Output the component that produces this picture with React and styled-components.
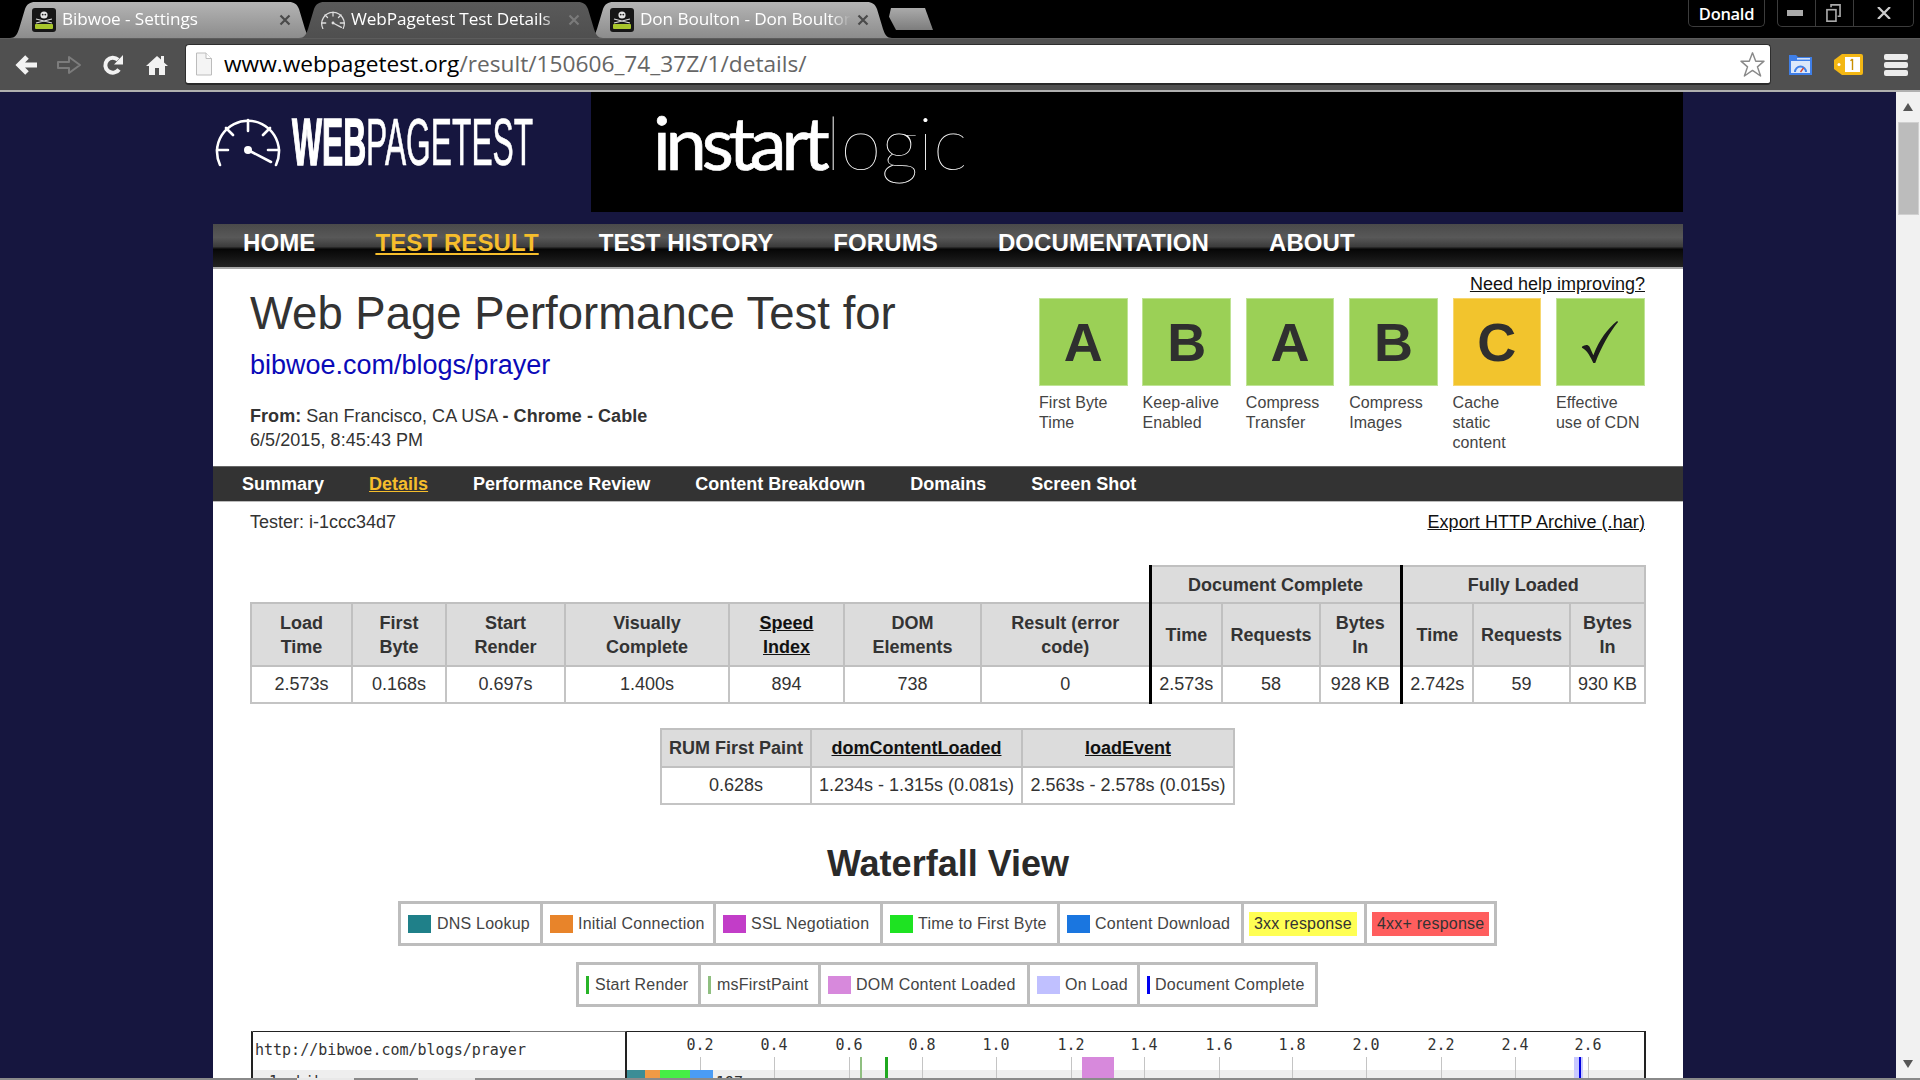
import React from "react";
import styled, { createGlobalStyle } from "styled-components";

const Global = createGlobalStyle`
  html, body { margin: 0; padding: 0; background: #16163f; overflow: hidden; }
  * { box-sizing: border-box; }
`;

const Root = styled.div`
  width: 1920px; height: 1080px; display: flex; flex-direction: column; overflow: hidden;
  font-family: "Liberation Sans", Arial, sans-serif; color: #333; background: #16163f;
`;

/* ---------- browser chrome ---------- */
const TabStrip = styled.div`
  height: 38px; background: #000; display: flex; align-items: flex-end; padding-left: 10px; flex: none;
  font-family: "Open Sans", sans-serif;
`;
const Tab = styled.div`
  width: 304px; height: 36px; margin-right: -15px; display: flex; align-items: center; flex: none;
  padding: 0 23px 0 22px; gap: 6px; position: relative; z-index: ${p => (p.$active ? 2 : 1)};
  background: ${p => (p.$active ? "linear-gradient(#5a5a5a,#4f4f4f)" : "linear-gradient(#b4b4b4,#8c8c8c)")};
  clip-path: path("M0 36 C5 36 7 33 9 27 L15 7 C17 2 20 0 25 0 L279 0 C284 0 287 2 289 7 L295 27 C297 33 299 36 304 36 Z");
`;
const TabTitle = styled.span`
  flex: 1; font-size: 17.2px; line-height: 24px; padding-bottom: 2px; color: #fff; white-space: nowrap; overflow: hidden; letter-spacing: -0.1px;
  -webkit-mask-image: linear-gradient(90deg, #000 90%, transparent 100%);
  mask-image: linear-gradient(90deg, #000 90%, transparent 100%);
`;
const NewTab = styled.div`
  width: 46px; height: 22px; margin: 0 0 8px 10px; flex: none; background: linear-gradient(#aaa,#7d7d7d);
  clip-path: polygon(4px 0, 38px 0, 46px 100%, 9px 100%, 2px 40%);
  position: relative; z-index: 0;
`;
const WindowArea = styled.div`
  margin-left: auto; align-self: flex-start; display: flex; gap: 12px; padding-right: 6px;
`;
const UserBadge = styled.div`
  width: 77px; height: 27px; border: 1px solid #3c3c3c; border-top: 0; border-radius: 0 0 5px 5px;
  color: #fff; font-size: 16.5px; font-weight: 600; text-align: center; line-height: 27px; letter-spacing: -0.3px;
`;
const WinButtons = styled.div`
  width: 137px; height: 27px; border: 1px solid #3c3c3c; border-top: 0; border-radius: 0 0 5px 5px; display: flex;
`;
const WinBtn = styled.div`
  width: ${p => p.$w}px; display: flex; align-items: center; justify-content: center;
  padding-right: ${p => p.$pr || 0}px;
  border-left: ${p => (p.$first ? "0" : "1px solid #3c3c3c")};
`;
const Toolbar = styled.div`
  height: 54px; flex: none; background: #505050; border-bottom: 2px solid #b0b0b0; display: flex; align-items: center;
  padding-left: 6px; border-top: 1px solid #5c5c5c; font-family: "Open Sans", sans-serif;
`;
const Slot = styled.div`
  width: ${p => p.$w}px; height: 40px; flex: none; display: flex; align-items: center; justify-content: center;
`;
const AddressBar = styled.div`
  width: 1586px; height: 41px; margin: 0 5px 0 7px; background: #fff; border-radius: 4px; flex: none;
  border: 1px solid #2e2e2e; border-bottom: 2px solid #2a2a2a; display: flex; align-items: center; padding: 0 4px 0 9px;
`;
const Url = styled.div`
  flex: 1; margin-left: 11px; padding-bottom: 1px; font-size: 22.7px; line-height: 30px; color: #666; white-space: nowrap;
  b { font-weight: 400; color: #000; }
`;

/* ---------- page ---------- */
const Viewport = styled.div`
  flex: 1; min-height: 0; display: flex;
`;
const Page = styled.div`
  flex: 1; overflow: hidden; background: #16163f;
`;
const Column = styled.div`
  width: 1470px; margin: 0 auto;
`;
const Header = styled.header`
  height: 120px; margin-bottom: 12px; display: flex;
`;
const LogoArea = styled.div`
  width: 378px; padding: 25px 0 0 2px; display: flex; align-items: flex-start; flex: none;
`;
const LogoText = styled.div`
  margin: -9px 0 0 11px; font-size: 67px; line-height: 67px; color: #fff; white-space: nowrap; transform: scaleX(.474); transform-origin: left top;
  -webkit-text-stroke: .7px #fff;
  b { font-weight: 700; -webkit-text-stroke: 1.6px #fff; }
`;
const Ad = styled.div`
  flex: 1; background: #000; padding: 2px 0 0 62px; color: #fff; white-space: nowrap;
  font-family: Lato, sans-serif; font-size: 74px; line-height: 96px;
`;
const AdStrong = styled.span`
  font-weight: 400; letter-spacing: -5.2px; -webkit-text-stroke: .7px #fff;
`;
const AdThin = styled.span`
  font-weight: 100; letter-spacing: -.3px; margin-left: 1px;
`;
const Nav = styled.nav`
  height: 45px; padding: 0 0 7px 30px; display: flex; gap: 60px; align-items: center;
  background: linear-gradient(#4a4a4a 0, #585858 30%, #3c3c3c 50%, #060606 56%, #232323 96%, #a8a8a8 96%);
`;
const NavLink = styled.a`
  font-size: 24px; font-weight: 700; letter-spacing: .1px; color: ${p => (p.$active ? "#f6be2c" : "#fff")};
  text-decoration: ${p => (p.$active ? "underline" : "none")};
`;
const Main = styled.main`
  background: #fff; padding-bottom: 40px;
`;
const Top = styled.section`
  height: 197px; display: flex; justify-content: space-between; padding: 0 38px 0 37px;
`;
const TitleCol = styled.div`
  padding-top: 20px;
`;
const Title = styled.h1`
  margin: 0; font-size: 45.5px; line-height: 50px; font-weight: 400; color: #333;
`;
const SiteLink = styled.a`
  display: block; margin-top: 10px; font-size: 27px; line-height: 32px; color: #0a0ab8;
`;
const Meta = styled.div`
  font-size: 18px; line-height: 24px; letter-spacing: .05px; margin-top: ${p => p.$mt || 0}px; color: #333;
`;
const GradeCol = styled.div`
  width: 606px; display: flex; flex-direction: column; align-items: flex-end;
`;
const HelpLink = styled.a`
  margin-top: 4px; font-size: 18px; line-height: 22px; color: #111; text-decoration: underline;
`;
const GradeGrid = styled.div`
  margin-top: 3px; width: 606px; display: grid; grid-template-columns: repeat(6, 88.7px); column-gap: 14.7px;
`;
const GradeBox = styled.div`
  height: 88px; border: 1px solid ${p => (p.$c === "y" ? "#f7d770" : "#bfe395")};
  background: ${p => (p.$c === "y" ? "#f2c42d" : "#9bd056")};
  display: flex; align-items: center; justify-content: center;
  font-size: 54px; font-weight: 700; color: #2f2f2f;
`;
const GradeLabel = styled.div`
  margin-top: 7px; font-size: 16px; line-height: 20px; letter-spacing: .1px; color: #444; white-space: nowrap;
`;
const SubNav = styled.nav`
  height: 36px; background: #333; border-top: 1px solid #666; border-bottom: 1px solid #bbb; padding-left: 29px; display: flex; gap: 45px; align-items: center;
`;
const SubLink = styled.a`
  font-size: 18px; font-weight: 700; color: ${p => (p.$active ? "#f6be2c" : "#fff")};
  text-decoration: ${p => (p.$active ? "underline" : "none")};
`;
const InfoRow = styled.div`
  height: 40px; display: flex; align-items: center; justify-content: space-between; padding: 0 38px 0 37px; font-size: 18px;
`;
const ExportLink = styled.a`
  color: #111; text-decoration: underline; letter-spacing: .07px;
`;
const Table = styled.table`
  border-collapse: collapse; table-layout: fixed; font-size: 18px; text-align: center; color: #333;
  margin: ${p => p.$m};
  width: ${p => p.$w}px;
`;
const Th = styled.th`
  background: #dcdcdc; border: 2px solid #c0c0c0; font-weight: 700; line-height: 24px; padding: 0; color: #333;
  height: ${p => p.$h || 63}px;
  border-left: ${p => (p.$strong ? "3px solid #000" : "2px solid #c0c0c0")};
  a { color: #111; text-decoration: underline; }
`;
const Blank = styled.th`
  border: 0; padding: 0; background: #fff;
`;
const Td = styled.td`
  border: 2px solid #c4c4c4; padding: 0; height: 37px; color: #333; white-space: nowrap;
  border-left: ${p => (p.$strong ? "3px solid #000" : "2px solid #c4c4c4")};
`;
const Heading = styled.h2`
  margin: 37px 0 15px; text-align: center; font-size: 36px; line-height: 44px; font-weight: 700; color: #2a2a2a;
`;
const Legend = styled.div`
  display: flex; width: max-content; height: 45px; margin: ${p => p.$m}; border: 3px solid #bdbdbd; background: #fff;
`;
const LegendItem = styled.div`
  width: ${p => p.$w}px; display: flex; align-items: center; gap: ${p => p.$gap ?? 5}px; padding-left: 7px; flex: none;
  font-size: 16px; color: #444; white-space: nowrap; letter-spacing: .22px;
  & + & { border-left: 3px solid #bdbdbd; }
`;
const Swatch = styled.span`
  width: ${p => p.$w || 23}px; height: 18px; flex: none; background: ${p => p.$c};
`;
const Badge = styled.span`
  background: ${p => p.$c}; padding: 0 5px; height: 24px; line-height: 24px; color: #333; margin-left: -2px;
`;
const Waterfall = styled.div`
  margin: 24px 0 0 38px; width: 1395px; height: 60px; display: flex; background: #fff;
`;
const UrlPanel = styled.div`
  width: 376px; flex: none; border-left: 2px solid #222; border-right: 2px solid #222; position: relative;
  border-top: 1px solid #777;
  font-family: "DejaVu Sans Mono", monospace; font-size: 15px; color: #333;
  &::before { content: ""; position: absolute; top: -1px; left: 0; width: 257px; height: 1px; background: #222; }
`;
const UrlHead = styled.div`
  height: 38px; padding: 9px 0 0 2px; line-height: 18px;
`;
const UrlRow = styled.div`
  height: 24px; background: #eee; padding-left: 16px; line-height: 24px;
`;
const Chart = styled.svg`
  flex: 1; display: block; height: 60px;
`;
const ChartLabel = styled.text`
  font-family: "DejaVu Sans Mono", monospace; font-size: 15px; fill: #333; text-anchor: middle;
`;
const Scrollbar = styled.div`
  width: 24px; flex: none; background: #f1f1f1; display: flex; flex-direction: column; align-items: center;
`;
const ArrowSlot = styled.div`
  height: ${p => p.$h}px; display: flex; align-items: center; justify-content: center; flex: none;
`;
const Arrow = styled.span`
  width: 0; height: 0; border-left: 5px solid transparent; border-right: 5px solid transparent;
  ${p => (p.$down ? "border-top: 8px solid #555;" : "border-bottom: 8px solid #555;")}
`;
const Thumb = styled.div`
  width: 21px; height: 93px; background: #bcbcbc; border: 1px solid #d0d0d0; flex: none;
`;
const Fill = styled.div` flex: 1; `;
const Frame = styled.div`
  height: 2px; flex: none; background: #8a8a8a; display: flex;
`;
const FrameNotch = styled.span`
  width: 57px; background: #e8e8e8; margin-left: ${p => p.$ml}px;
`;

/* ---------- drawings ---------- */
const Gauge = ({ size = 66, color = "#fff", sw = 2.6 }) => (
  <svg width={size} height={size * 50 / 66} viewBox="0 0 66 50" fill="none" stroke={color} strokeWidth={sw} strokeLinecap="round" style={{ flex: "none" }}>
    <path d="M5 48A31 31 0 1 1 61 48" />
    <path d="M33 3V14M2 33H13M64 33H53M11 11L18 18M55 11L48 18" />
    <path d="M33 33L56 45" />
    <circle cx="33" cy="33" r="4" fill={color} stroke="none" />
  </svg>
);
const SkullIcon = () => (
  <svg width="24" height="24" viewBox="0 0 24 24" style={{ flex: "none" }}>
    <rect width="24" height="24" rx="3" fill="#161616" />
    <circle cx="12" cy="7" r="3.6" fill="#e4e4e4" />
    <path d="M4 11L20 15M20 11L4 15" stroke="#ddd" strokeWidth="1.2" />
    <circle cx="10.7" cy="6.6" r=".9" fill="#222" /><circle cx="13.3" cy="6.6" r=".9" fill="#222" />
    <rect x="3" y="16" width="18" height="5" rx="1" fill="#a8c62c" />
  </svg>
);
const CloseX = ({ color }) => (
  <svg width="12" height="12" viewBox="0 0 12 12" style={{ flex: "none" }}>
    <path d="M1.5 1.5L10.5 10.5M10.5 1.5L1.5 10.5" stroke={color} strokeWidth="2.2" />
  </svg>
);
const BackIcon = () => (
  <svg width="24" height="22" viewBox="0 0 24 22"><path d="M22 11H6M12 3L4 11L12 19" fill="none" stroke="#f2f2f2" strokeWidth="5" /></svg>
);
const ForwardIcon = () => (
  <svg width="26" height="22" viewBox="0 0 26 22"><path d="M2 8H13V3L24 11L13 19V14H2Z" fill="none" stroke="#7c7c7c" strokeWidth="2" strokeLinejoin="round" /></svg>
);
const ReloadIcon = () => (
  <svg width="24" height="24" viewBox="0 0 24 24"><path d="M18 16.5A7.5 7.5 0 1 1 17 6.8" fill="none" stroke="#f2f2f2" strokeWidth="4" /><path d="M22 2V11.5H13Z" fill="#f2f2f2" /></svg>
);
const HomeIcon = () => (
  <svg width="22" height="22" viewBox="0 0 22 22"><path d="M11 2L15 5.5V2H18V8.5L22 12H19V21H13V14H9V21H3V12H0Z" fill="#f2f2f2" /></svg>
);
const PageIcon = () => (
  <svg width="18" height="24" viewBox="0 0 18 24"><path d="M1.5 1H11L16.5 6.5V23H1.5Z" fill="#f4f4f4" stroke="#bcbcbc" /><path d="M11 1V6.5H16.5" fill="#fff" stroke="#bcbcbc" /></svg>
);
const StarIcon = () => (
  <svg width="27" height="27" viewBox="0 0 30 30" style={{ flex: "none" }}><path d="M15 2L18.6 11.3H27.8L20.5 17.6L24 27.8L15 21.6L6 27.8L9.5 17.6L2.2 11.3H11.4Z" fill="#fff" stroke="#8a8a8a" strokeWidth="1.6" strokeLinejoin="round" /></svg>
);
const FolderIcon = () => (
  <svg width="23" height="20" viewBox="0 0 23 20">
    <path d="M0 0H7L9 2H23V20H0Z" fill="#3f7fe8" />
    <rect x="8" y="3" width="13" height="1.6" fill="#cfe0fb" />
    <rect x="2" y="6" width="19" height="12" fill="#dbe8fb" />
    <path d="M6 17A5.5 5.5 0 0 1 17 17" fill="none" stroke="#3f7fe8" strokeWidth="2" />
    <path d="M11.5 17L14.5 13" stroke="#d8462e" strokeWidth="1.4" />
  </svg>
);
const TagIcon = () => (
  <svg width="29" height="21" viewBox="0 0 29 21">
    <path d="M8 0H27A2 2 0 0 1 29 2V19A2 2 0 0 1 27 21H8L0 15V6Z" fill="#f3b714" />
    <rect x="11" y="3" width="15" height="15" fill="#fff" />
    <circle cx="5" cy="10.5" r="1.5" fill="#fff" />
    <path d="M18.5 5V16M16.5 6.8L18.5 5" stroke="#c98f00" strokeWidth="1.4" fill="none" />
  </svg>
);
const MenuIcon = () => (
  <svg width="24" height="22" viewBox="0 0 24 22" fill="#ececec"><rect y="0" width="24" height="6" rx="2" /><rect y="8" width="24" height="6" rx="2" /><rect y="16" width="24" height="6" rx="2" /></svg>
);
const CheckMark = () => (
  <svg width="38" height="44" viewBox="0 0 40 46"><path d="M1 28C4 26 7 25 9 28L13 37C19 21 28 9 38 1L39 2C30 13 22 27 15 45L13 45C10 39 7 32 1 29Z" fill="#1c1c1c" /></svg>
);

/* ---------- data ---------- */
const grades = [
  { g: "A", l: ["First Byte", "Time"] },
  { g: "B", l: ["Keep-alive", "Enabled"] },
  { g: "A", l: ["Compress", "Transfer"] },
  { g: "B", l: ["Compress", "Images"] },
  { g: "C", l: ["Cache", "static", "content"], c: "y" },
  { g: "check", l: ["Effective", "use of CDN"] },
];
const cols = [101, 94, 119, 164, 115, 137, 169, 72, 98, 81, 72, 97, 75];
const ticks = [[0.2, 73], [0.4, 147], [0.6, 222], [0.8, 295], ["1.0", 369], [1.2, 444], [1.4, 517], [1.6, 592], [1.8, 665], ["2.0", 739], [2.2, 814], [2.4, 888], [2.6, 961]];

const WaterfallChart = () => (
  <Chart viewBox="0 0 1019 60" preserveAspectRatio="none">
    <rect x="0" y="0" width="1019" height="1" fill="#222" />
    <rect x="1017" y="0" width="2" height="60" fill="#222" />
    <rect x="0" y="39" width="1017" height="21" fill="#eee" />
    {ticks.map(([t, x]) => (
      <g key={x}>
        <rect x={x} y="26" width="1" height="34" fill="#c4c4c4" />
        <ChartLabel x={x} y="19">{Number(t).toFixed(1)}</ChartLabel>
      </g>
    ))}
    <rect x="455" y="26" width="32" height="34" fill="#d789dc" />
    <rect x="947" y="26" width="9" height="34" fill="#c8c8ff" />
    <rect x="952" y="26" width="2" height="34" fill="#0000e0" />
    <rect x="233" y="26" width="2" height="34" fill="#8fbf80" />
    <rect x="258" y="26" width="3" height="34" fill="#1fa81f" />
    <rect x="0" y="39" width="18" height="21" fill="#3b8d96" />
    <rect x="18" y="39" width="15" height="21" fill="#f09a45" />
    <rect x="33" y="39" width="30" height="21" fill="#45ee45" />
    <rect x="63" y="39" width="23" height="21" fill="#4a9cf5" />
    <ChartLabel x="116" y="57">197 ms</ChartLabel>
  </Chart>
);

export default function App() {
  return (
    <Root>
      <Global />
      <TabStrip>
        <Tab><SkullIcon /><TabTitle>Bibwoe - Settings</TabTitle><CloseX color="#4a4a4a" /></Tab>
        <Tab $active><Gauge size={24} color="#ddd" sw={3.5} /><TabTitle>WebPagetest Test Details</TabTitle><CloseX color="#7a7a7a" /></Tab>
        <Tab><SkullIcon /><TabTitle>Don Boulton - Don Boulton</TabTitle><CloseX color="#4a4a4a" /></Tab>
        <NewTab />
        <WindowArea>
          <UserBadge>Donald</UserBadge>
          <WinButtons>
            <WinBtn $first $w={37} $pr={3}><svg width="16" height="6"><rect width="16" height="6" fill="#aaa" /></svg></WinBtn>
            <WinBtn $w={38} $pr={2}><svg width="17" height="18" viewBox="0 0 18 22" fill="none" stroke="#aaa" strokeWidth="2"><rect x="1" y="7" width="11" height="14" /><path d="M6 4V1H17V15H14" /></svg></WinBtn>
            <WinBtn $w={60}><svg width="14" height="12" viewBox="0 0 16 14"><path d="M1 0L15 14M15 0L1 14" stroke="#ccc" strokeWidth="2.6" /></svg></WinBtn>
          </WinButtons>
        </WindowArea>
      </TabStrip>
      <Toolbar>
        <Slot $w={42}><BackIcon /></Slot>
        <Slot $w={42}><ForwardIcon /></Slot>
        <Slot $w={45}><ReloadIcon /></Slot>
        <Slot $w={43}><HomeIcon /></Slot>
        <AddressBar>
          <PageIcon />
          <Url><b>www.webpagetest.org</b>/result/150606_74_37Z/1/details/</Url>
          <StarIcon />
        </AddressBar>
        <Slot $w={48}><FolderIcon /></Slot>
        <Slot $w={48}><TagIcon /></Slot>
        <Slot $w={48}><MenuIcon /></Slot>
      </Toolbar>
      <Viewport>
        <Page>
          <Column>
            <Header>
              <LogoArea>
                <Gauge />
                <LogoText><b>WEB</b>PAGETEST</LogoText>
              </LogoArea>
              <Ad><AdStrong>instart</AdStrong><AdThin>logic</AdThin></Ad>
            </Header>
            <Nav>
              <NavLink>HOME</NavLink>
              <NavLink $active>TEST RESULT</NavLink>
              <NavLink>TEST HISTORY</NavLink>
              <NavLink>FORUMS</NavLink>
              <NavLink>DOCUMENTATION</NavLink>
              <NavLink>ABOUT</NavLink>
            </Nav>
            <Main>
              <Top>
                <TitleCol>
                  <Title>Web Page Performance Test for</Title>
                  <SiteLink>bibwoe.com/blogs/prayer</SiteLink>
                  <Meta $mt={23}><b>From:</b> San Francisco, CA USA <b>- Chrome - Cable</b></Meta>
                  <Meta>6/5/2015, 8:45:43 PM</Meta>
                </TitleCol>
                <GradeCol>
                  <HelpLink>Need help improving?</HelpLink>
                  <GradeGrid>
                    {grades.map((g, i) => (
                      <div key={i}>
                        <GradeBox $c={g.c}>{g.g === "check" ? <CheckMark /> : g.g}</GradeBox>
                        <GradeLabel>{g.l.map(t => <div key={t}>{t}</div>)}</GradeLabel>
                      </div>
                    ))}
                  </GradeGrid>
                </GradeCol>
              </Top>
              <SubNav>
                <SubLink>Summary</SubLink>
                <SubLink $active>Details</SubLink>
                <SubLink>Performance Review</SubLink>
                <SubLink>Content Breakdown</SubLink>
                <SubLink>Domains</SubLink>
                <SubLink>Screen Shot</SubLink>
              </SubNav>
              <InfoRow>
                <span>Tester: i-1ccc34d7</span>
                <ExportLink>Export HTTP Archive (.har)</ExportLink>
              </InfoRow>
              <Table $w={1394} $m="23px 0 0 37px">
                <colgroup>{cols.map((w, i) => <col key={i} style={{ width: w }} />)}</colgroup>
                <thead>
                  <tr>
                    <Blank colSpan={7} />
                    <Th $h={37} $strong colSpan={3}>Document Complete</Th>
                    <Th $h={37} $strong colSpan={3}>Fully Loaded</Th>
                  </tr>
                  <tr>
                    <Th>Load<br />Time</Th>
                    <Th>First<br />Byte</Th>
                    <Th>Start<br />Render</Th>
                    <Th>Visually<br />Complete</Th>
                    <Th><a>Speed<br />Index</a></Th>
                    <Th>DOM<br />Elements</Th>
                    <Th>Result (error<br />code)</Th>
                    <Th $strong>Time</Th>
                    <Th>Requests</Th>
                    <Th>Bytes<br />In</Th>
                    <Th $strong>Time</Th>
                    <Th>Requests</Th>
                    <Th>Bytes<br />In</Th>
                  </tr>
                </thead>
                <tbody>
                  <tr>
                    <Td>2.573s</Td><Td>0.168s</Td><Td>0.697s</Td><Td>1.400s</Td><Td>894</Td><Td>738</Td><Td>0</Td>
                    <Td $strong>2.573s</Td><Td>58</Td><Td>928 KB</Td>
                    <Td $strong>2.742s</Td><Td>59</Td><Td>930 KB</Td>
                  </tr>
                </tbody>
              </Table>
              <Table $w={573} $m="24px 0 0 447px">
                <colgroup><col style={{ width: 150 }} /><col style={{ width: 211 }} /><col style={{ width: 212 }} /></colgroup>
                <thead>
                  <tr>
                    <Th $h={38}>RUM First Paint</Th>
                    <Th $h={38}><a>domContentLoaded</a></Th>
                    <Th $h={38}><a>loadEvent</a></Th>
                  </tr>
                </thead>
                <tbody>
                  <tr><Td>0.628s</Td><Td>1.234s - 1.315s (0.081s)</Td><Td>2.563s - 2.578s (0.015s)</Td></tr>
                </tbody>
              </Table>
              <Heading>Waterfall View</Heading>
              <Legend $m="0 0 0 185px">
                <LegendItem $w={139} $gap={6}><Swatch $c="#1f8089" />DNS Lookup</LegendItem>
                <LegendItem $w={173}><Swatch $c="#e8842a" />Initial Connection</LegendItem>
                <LegendItem $w={167}><Swatch $c="#c23dc8" />SSL Negotiation</LegendItem>
                <LegendItem $w={177}><Swatch $c="#1ee322" />Time to First Byte</LegendItem>
                <LegendItem $w={184}><Swatch $c="#1a76e0" />Content Download</LegendItem>
                <LegendItem $w={123}><Badge $c="#ffff54">3xx response</Badge></LegendItem>
                <LegendItem $w={130}><Badge $c="#ff5e5e">4xx+ response</Badge></LegendItem>
              </Legend>
              <Legend $m="16px 0 0 363px">
                <LegendItem $w={119} $gap={6}><Swatch $w={3} $c="#28b428" />Start Render</LegendItem>
                <LegendItem $w={120} $gap={6}><Swatch $w={3} $c="#8fbf80" />msFirstPaint</LegendItem>
                <LegendItem $w={209}><Swatch $c="#d789dc" />DOM Content Loaded</LegendItem>
                <LegendItem $w={110}><Swatch $c="#c0c0ff" />On Load</LegendItem>
                <LegendItem $w={178}><Swatch $w={3} $c="#0000f0" />Document Complete</LegendItem>
              </Legend>
              <Waterfall>
                <UrlPanel>
                  <UrlHead>http://bibwoe.com/blogs/prayer</UrlHead>
                  <UrlRow>1. bibwoe.com - prayer</UrlRow>
                </UrlPanel>
                <WaterfallChart />
              </Waterfall>
            </Main>
          </Column>
        </Page>
        <Scrollbar>
          <ArrowSlot $h={30}><Arrow /></ArrowSlot>
          <Thumb />
          <Fill />
          <ArrowSlot $h={28}><Arrow $down /></ArrowSlot>
        </Scrollbar>
      </Viewport>
      <Frame><FrameNotch $ml={297} /><FrameNotch $ml={64} /></Frame>
    </Root>
  );
}
